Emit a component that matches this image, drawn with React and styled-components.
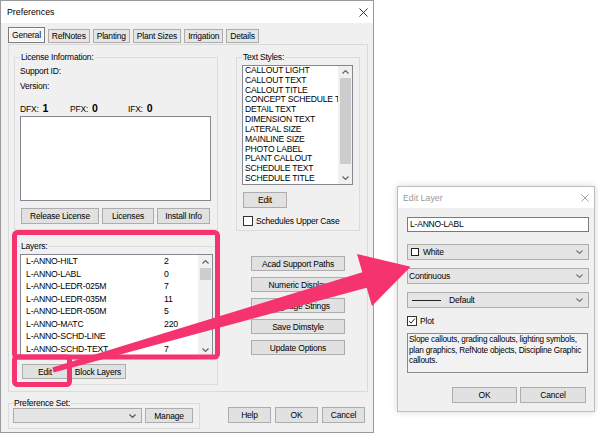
import React from "react";
import styled, { createGlobalStyle } from "styled-components";

const UI_FONT = `"Liberation Sans", Arial, sans-serif`;
const PINK = "#f5336f";

const GlobalStyle = createGlobalStyle`
  html, body {
    margin: 0;
    padding: 0;
    background: #ffffff;
  }
  body {
    width: 598px;
    height: 434px;
    overflow: hidden;
    font-family: ${UI_FONT};
    font-size: 8.5px;
    letter-spacing: -0.2px;
    color: #000;
  }
`;

const Desktop = styled.div`
  position: relative;
  width: 598px;
  height: 434px;
  overflow: hidden;
`;

const Win = styled.div`
  position: absolute;
  left: ${(p) => p.$x}px;
  top: ${(p) => p.$y}px;
  width: ${(p) => p.$w}px;
  height: ${(p) => p.$h}px;
  box-sizing: border-box;
  border: 1px solid ${(p) => p.$border};
  background: #f0f0f0;
  display: flex;
  flex-direction: column;
  box-shadow: ${(p) => (p.$shadow ? "0 0 7px rgba(0,0,0,0.16)" : "none")};
`;

const TitleBar = styled.div`
  flex: none;
  height: ${(p) => p.$h}px;
  background: #ffffff;
  display: flex;
  align-items: center;
  justify-content: space-between;
  padding: 0 ${(p) => p.$pr}px 0 ${(p) => p.$pl}px;
  font-size: 8.8px;
  letter-spacing: 0;
  color: ${(p) => p.$color};
`;

const DialogBody = styled.div`
  flex: 1;
  display: flex;
  flex-direction: column;
`;

const TabStrip = styled.div`
  display: flex;
  align-items: flex-end;
  gap: 3px;
  height: 17px;
  margin: 4px 0 0 7px;
`;

const Tab = styled.div`
  height: ${(p) => (p.$active ? 16 : 14)}px;
  box-sizing: border-box;
  padding: 0 3px;
  border: 1px solid ${(p) => (p.$active ? "#7a7a7a" : "#adadad")};
  background: ${(p) => (p.$active ? "#f3f3f3" : "#e6e6e6")};
  box-shadow: ${(p) => (p.$active ? "inset 0 0 0 1px #ffffff" : "none")};
  display: flex;
  align-items: center;
  white-space: nowrap;
  margin-bottom: 1px;
`;

const TabPage = styled.div`
  margin-left: 7px;
  width: 360px;
  height: 348px;
  box-sizing: border-box;
  border: 1px solid #dadada;
  display: flex;
  gap: 18px;
  padding: 7px 0 0 5px;
`;

const Column = styled.div`
  width: ${(p) => p.$w}px;
  display: flex;
  flex-direction: column;
  align-items: flex-start;
`;

const Group = styled.fieldset`
  margin: ${(p) => p.$mt || 0}px 0 0 0;
  padding: 0 ${(p) => p.$pr}px ${(p) => p.$pb}px ${(p) => p.$pl}px;
  width: ${(p) => p.$w}px;
  box-sizing: border-box;
  min-width: 0;
  border: 1px solid #dcdcdc;
  display: flex;
  flex-direction: column;
  align-items: flex-start;
`;

const Legend = styled.legend`
  padding: 0 1px;
  line-height: ${(p) => p.$lh || 11}px;
`;

const Label = styled.div`
  line-height: 11px;
  margin-top: ${(p) => p.$mt || 0}px;
  white-space: nowrap;
`;

const Stats = styled.div`
  display: flex;
  margin-top: 11px;
  line-height: 11px;
`;

const Stat = styled.div`
  width: ${(p) => p.$w}px;
  display: flex;
  align-items: baseline;
  gap: 4px;
  white-space: nowrap;
`;

const StatValue = styled.span`
  font-weight: bold;
  font-size: 10.5px;
  letter-spacing: 0;
`;

const TextArea = styled.div`
  width: ${(p) => p.$w}px;
  height: ${(p) => p.$h}px;
  box-sizing: border-box;
  margin-top: ${(p) => p.$mt || 0}px;
  border: 1px solid #828790;
  background: #ffffff;
`;

const ButtonRow = styled.div`
  display: flex;
  gap: ${(p) => p.$gap}px;
  margin-top: ${(p) => p.$mt || 0}px;
  margin-left: ${(p) => p.$ml || 0}px;
  justify-content: ${(p) => p.$justify || "flex-start"};
  align-self: stretch;
`;

const ButtonStack = styled.div`
  display: flex;
  flex-direction: column;
  gap: 6px;
  margin: 25px 0 0 15px;
`;

const Btn = styled.div`
  flex: none;
  width: ${(p) => p.$w}px;
  height: ${(p) => p.$h || 16}px;
  box-sizing: border-box;
  border: 1px solid #adadad;
  background: #e1e1e1;
  display: flex;
  align-items: center;
  justify-content: center;
  white-space: nowrap;
`;

const List = styled.div`
  width: ${(p) => p.$w}px;
  height: ${(p) => p.$h}px;
  box-sizing: border-box;
  margin-top: 2px;
  border: 1px solid #828790;
  background: #ffffff;
  display: flex;
  overflow: hidden;
`;

const ListBody = styled.div`
  flex: 1;
  min-width: 0;
  padding-left: ${(p) => p.$pl}px;
  overflow: hidden;
`;

const Row = styled.div`
  display: flex;
  height: ${(p) => p.$h}px;
  line-height: ${(p) => p.$h}px;
  font-size: ${(p) => p.$fs || 8.5}px;
  white-space: nowrap;
  overflow: hidden;
`;

const Cell = styled.span`
  flex: none;
  width: ${(p) => p.$w}px;
  overflow: hidden;
`;

const ScrollBar = styled.div`
  flex: none;
  width: 14px;
  background: #f0f0f0;
  display: flex;
  flex-direction: column;
  align-items: center;
`;

const ScrollArrow = styled.div`
  flex: none;
  height: ${(p) => p.$h}px;
  width: 100%;
  display: flex;
  align-items: center;
  justify-content: center;
`;

const Track = styled.div`
  flex: 1;
  width: 100%;
  display: flex;
  flex-direction: column;
  align-items: center;
`;

const Thumb = styled.div`
  width: 11px;
  margin-top: ${(p) => p.$top}px;
  height: ${(p) => p.$h}px;
  background: #cdcdcd;
`;

const CheckRow = styled.div`
  display: flex;
  align-items: center;
  gap: ${(p) => p.$gap}px;
  height: 11px;
  margin-top: ${(p) => p.$mt || 0}px;
  margin-left: ${(p) => p.$ml || 0}px;
  white-space: nowrap;
`;

const CheckBox = styled.span`
  width: 10px;
  height: 10px;
  box-sizing: border-box;
  border: 1px solid #333333;
  background: #ffffff;
  display: inline-flex;
  align-items: center;
  justify-content: center;
`;

const Combo = styled.div`
  flex: none;
  width: ${(p) => p.$w}px;
  height: ${(p) => p.$h}px;
  box-sizing: border-box;
  margin-top: ${(p) => p.$mt || 0}px;
  border: 1px solid #acacac;
  background: #e5e5e5;
  display: flex;
  align-items: center;
  padding: 0 5px 0 ${(p) => p.$pl || 3}px;
  white-space: nowrap;
`;

const ComboText = styled.span`
  flex: 1;
  display: flex;
  align-items: center;
  gap: ${(p) => p.$gap || 0}px;
`;

const Swatch = styled.span`
  width: 8px;
  height: 8px;
  box-sizing: border-box;
  border: 1px solid #222222;
  background: #ffffff;
`;

const LineSample = styled.span`
  width: 29px;
  height: 1px;
  background: #222222;
`;

const BottomRow = styled.div`
  display: flex;
  align-items: flex-start;
  margin: 6px 0 0 7px;
`;

const PrefRow = styled.div`
  display: flex;
  gap: 3px;
`;

const EditBody = styled.div`
  flex: 1;
  display: flex;
  flex-direction: column;
  align-items: flex-start;
  padding: 0 5px 0 9px;
`;

const TextInput = styled.div`
  width: 182px;
  height: 15px;
  box-sizing: border-box;
  margin-top: 9px;
  border: 1px solid #7a7a7a;
  background: #ffffff;
  padding-left: 2px;
  line-height: 13px;
`;

const Description = styled.div`
  width: 181px;
  height: 40px;
  box-sizing: border-box;
  margin-top: 7px;
  border: 1px solid #8a8a8a;
  background: #f2f2f2;
  padding: 1px 0 0 1px;
  font-size: 8.2px;
  line-height: 10.5px;
  white-space: nowrap;
`;

const Overlay = styled.svg`
  position: absolute;
  left: 0;
  top: 0;
  width: 598px;
  height: 434px;
  pointer-events: none;
`;

function CloseIcon({ size, color }) {
  return (
    <svg width={size} height={size} viewBox="0 0 10 10">
      <path d="M0.5 0.5 L9.5 9.5 M9.5 0.5 L0.5 9.5" stroke={color} strokeWidth="1" />
    </svg>
  );
}

function Chevron({ up, color = "#606060" }) {
  return (
    <svg width="7" height="4" viewBox="0 0 7 4">
      <polyline
        points={up ? "0.5,3.5 3.5,0.6 6.5,3.5" : "0.5,0.5 3.5,3.4 6.5,0.5"}
        fill="none"
        stroke={color}
        strokeWidth="1.2"
      />
    </svg>
  );
}

function Scroll({ upH, downH, thumbTop, thumbH }) {
  return (
    <ScrollBar>
      <ScrollArrow $h={upH}>
        <Chevron up />
      </ScrollArrow>
      <Track>
        <Thumb $top={thumbTop} $h={thumbH} />
      </Track>
      <ScrollArrow $h={downH}>
        <Chevron />
      </ScrollArrow>
    </ScrollBar>
  );
}

const tabs = ["General", "RefNotes", "Planting", "Plant Sizes", "Irrigation", "Details"];

const textStyles = [
  "CALLOUT LIGHT",
  "CALLOUT TEXT",
  "CALLOUT TITLE",
  "CONCEPT SCHEDULE TEXT",
  "DETAIL TEXT",
  "DIMENSION TEXT",
  "LATERAL SIZE",
  "MAINLINE SIZE",
  "PHOTO LABEL",
  "PLANT CALLOUT",
  "SCHEDULE TEXT",
  "SCHEDULE TITLE",
];

const layers = [
  ["L-ANNO-HILT", "2"],
  ["L-ANNO-LABL", "0"],
  ["L-ANNO-LEDR-025M", "7"],
  ["L-ANNO-LEDR-035M", "11"],
  ["L-ANNO-LEDR-050M", "5"],
  ["L-ANNO-MATC", "220"],
  ["L-ANNO-SCHD-LINE", "7"],
  ["L-ANNO-SCHD-TEXT", "7"],
];

const sideButtons = [
  "Acad Support Paths",
  "Numeric Display",
  "Language Strings",
  "Save Dimstyle",
  "Update Options",
];

function Preferences() {
  return (
    <Win $x={0} $y={0} $w={374} $h={433} $border="#9a9a9a">
      <TitleBar $h={22} $pl={6} $pr={5} $color="#000">
        <span>Preferences</span>
        <CloseIcon size={9} color="#222" />
      </TitleBar>
      <DialogBody>
        <TabStrip>
          {tabs.map((t, i) => (
            <Tab key={t} $active={i === 0}>
              {t}
            </Tab>
          ))}
        </TabStrip>
        <TabPage>
          <Column $w={204}>
            <Group $w={204} $pl={5} $pr={6} $pb={5}>
              <Legend>License Information:</Legend>
              <Label $mt={3}>Support ID:</Label>
              <Label $mt={4}>Version:</Label>
              <Stats>
                <Stat $w={50}>
                  DFX: <StatValue>1</StatValue>
                </Stat>
                <Stat $w={58}>
                  PFX: <StatValue>0</StatValue>
                </Stat>
                <Stat $w={40}>
                  IFX: <StatValue>0</StatValue>
                </Stat>
              </Stats>
              <TextArea $w={191} $h={85} $mt={1} />
              <ButtonRow $gap={3} $mt={7} $ml={1}>
                <Btn $w={78}>Release License</Btn>
                <Btn $w={52}>Licenses</Btn>
                <Btn $w={53}>Install Info</Btn>
              </ButtonRow>
            </Group>
            <Group $w={204} $pl={5} $pr={6} $pb={5} $mt={11}>
              <Legend>Layers:</Legend>
              <List $w={193} $h={103}>
                <ListBody $pl={5}>
                  {layers.map(([name, n]) => (
                    <Row key={name} $h={12.5} $fs={8.7}>
                      <Cell $w={138}>{name}</Cell>
                      <span>{n}</span>
                    </Row>
                  ))}
                </ListBody>
                <Scroll upH={13} downH={13} thumbTop={0} thumbH={12} />
              </List>
              <ButtonRow $gap={2} $mt={7} $ml={2}>
                <Btn $w={46} $h={15}>Edit</Btn>
                <Btn $w={56} $h={15}>Block Layers</Btn>
              </ButtonRow>
            </Group>
          </Column>
          <Column $w={124}>
            <Group $w={124} $pl={5} $pr={6} $pb={4}>
              <Legend>Text Styles:</Legend>
              <List $w={111} $h={120}>
                <ListBody $pl={2}>
                  {textStyles.map((s) => (
                    <Row key={s} $h={9.83} $fs={8.6}>
                      {s}
                    </Row>
                  ))}
                </ListBody>
                <Scroll upH={12} downH={13} thumbTop={0} thumbH={86} />
              </List>
              <ButtonRow $gap={0} $mt={7} $ml={1}>
                <Btn $w={44}>Edit</Btn>
              </ButtonRow>
              <CheckRow $gap={3} $mt={7} $ml={1}>
                <CheckBox />
                Schedules Upper Case
              </CheckRow>
            </Group>
            <ButtonStack>
              {sideButtons.map((b) => (
                <Btn key={b} $w={94} $h={15}>
                  {b}
                </Btn>
              ))}
            </ButtonStack>
          </Column>
        </TabPage>
        <BottomRow>
          <Group $w={192} $pl={4} $pr={6} $pb={5} $mt={0}>
            <Legend $lh={10}>Preference Set:</Legend>
            <PrefRow>
              <Combo $w={129} $h={15}>
                <ComboText />
                <Chevron color="#555" />
              </Combo>
              <Btn $w={48} $h={15}>Manage</Btn>
            </PrefRow>
          </Group>
          <ButtonRow $gap={4} $mt={9} $ml={28}>
            <Btn $w={43}>Help</Btn>
            <Btn $w={43}>OK</Btn>
            <Btn $w={43}>Cancel</Btn>
          </ButtonRow>
        </BottomRow>
      </DialogBody>
    </Win>
  );
}

function EditLayer() {
  return (
    <Win $x={397} $y={186} $w={198} $h={226} $border="#bdbdbd" $shadow>
      <TitleBar $h={21} $pl={5} $pr={5} $color="#9a9a9a">
        <span>Edit Layer</span>
        <CloseIcon size={8} color="#8a8a8a" />
      </TitleBar>
      <EditBody>
        <TextInput>L-ANNO-LABL</TextInput>
        <Combo $w={182} $h={16} $mt={12} $pl={3}>
          <ComboText $gap={4}>
            <Swatch />
            White
          </ComboText>
          <Chevron color="#777" />
        </Combo>
        <Combo $w={182} $h={16} $mt={8} $pl={1}>
          <ComboText>Continuous</ComboText>
          <Chevron color="#777" />
        </Combo>
        <Combo $w={182} $h={16} $mt={8} $pl={4}>
          <ComboText $gap={8}>
            <LineSample />
            Default
          </ComboText>
          <Chevron color="#777" />
        </Combo>
        <CheckRow $gap={3} $mt={7}>
          <CheckBox>
            <svg width="8" height="8" viewBox="0 0 8 8">
              <polyline points="1,4 3,6.2 7,1.5" fill="none" stroke="#222" strokeWidth="1" />
            </svg>
          </CheckBox>
          Plot
        </CheckRow>
        <Description>
          <div>Slope callouts, grading callouts, lighting symbols,</div>
          <div>plan graphics, RefNote objects, Discipline Graphic</div>
          <div>callouts.</div>
        </Description>
        <ButtonRow $gap={3} $mt={14} $justify="flex-end">
          <Btn $w={65}>OK</Btn>
          <Btn $w={66}>Cancel</Btn>
          <span style={{ width: 0 }} />
        </ButtonRow>
      </EditBody>
    </Win>
  );
}

function Annotations() {
  return (
    <Overlay viewBox="0 0 598 434">
      <g fill="none" stroke={PINK} strokeWidth="5" strokeLinejoin="round">
        <rect x="14.5" y="232.5" width="203" height="124.5" rx="3" />
        <rect x="14.5" y="357" width="55" height="27.5" rx="3" />
      </g>
      <polygon
        fill={PINK}
        points="52.3,367.6 362.3,272.3 357,254 410.6,266.7 372,306 366.7,287.7 53.7,372.4"
      />
    </Overlay>
  );
}

export default function App() {
  return (
    <>
      <GlobalStyle />
      <Desktop>
        <Preferences />
        <EditLayer />
        <Annotations />
      </Desktop>
    </>
  );
}
